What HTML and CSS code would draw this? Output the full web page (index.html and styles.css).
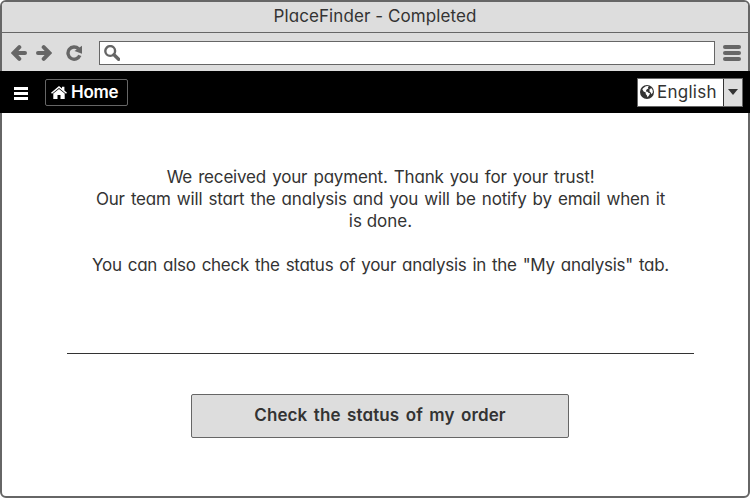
FILE: index.html
```
<!DOCTYPE html>
<html lang="en">
<head>
<meta charset="utf-8">
<title>PlaceFinder - Completed</title>
<link rel="stylesheet" href="styles.css">
</head>
<body>
<div class="window">
  <header class="titlebar">PlaceFinder - Completed</header>
  <div class="toolbar">
    <svg class="arrow" viewBox="0 0 16 16"><path d="M8.300 2.200 2.600 8l5.700 5.800M3 8h11"/></svg>
    <svg class="arrow forward" viewBox="0 0 16 16"><path d="M7.700 2.200l5.700 5.800-5.700 5.800M13 8H2"/></svg>
    <svg class="reload" viewBox="0 0 16 16"><path class="ring" d="M13.800 10.300A6.100 6.100 0 1 1 12.500 3.800"/><path class="tip" d="M16 .8v8L8.500 6z"/></svg>
    <div class="address"><svg class="search" viewBox="0 0 16 16"><circle cx="6.200" cy="6" r="4.900"/><path d="M10 9.800l4.600 4.400"/></svg></div>
    <div class="menu"><i></i><i></i><i></i></div>
  </div>
  <nav class="navbar">
    <div class="bars"><i></i><i></i><i></i></div>
    <a class="home"><svg viewBox="0 0 16 13"><path d="M8 0 11 2.500V.7h2.400v3.800L16 6.700l-1 1.100-7-5.800-7 5.800L0 6.700z"/><path d="M8 2.900l5.700 4.700V13H9.500V9h-3v4H2.300V7.600z"/></svg><span>Home</span></a>
    <div class="language">
      <div class="value"><svg viewBox="0 0 14 14"><circle cx="7" cy="7" r="7"/><path d="M5.800 1.200l2-.2 1 .6-.9.900.5 1-1.500.7-.8 1.300-.2 1 1.500.2 1.300 1.200 1.400.4-.8 1.800-1.700 2.200-.8-2-1.100-1.400.1-1.300L3.600 6.400 2.300 4.300l1-1.400zM9.600 4.100l1.900-.8 1.200 2 .1 2.200-1.200 1.800-.9-1.800-1.200-1z"/></svg><span>English</span></div>
      <div class="toggle"></div>
    </div>
  </nav>
  <main class="content">
    <p class="message">
      <span class="thanks">We received your payment. Thank you for your trust!</span><br>
      <span class="notice">Our team will start the analysis and you will be notify by email when it</span><br>
      <span>is done.</span><br><br>
      <span class="hint">You can also check the status of your analysis in the "My analysis" tab.</span>
    </p>
    <hr>
    <button class="status">Check the status of my order</button>
  </main>
</div>
</body>
</html>
```
FILE: styles.css
```
* { box-sizing: border-box; }
body { margin: 0; background: #fff; color: #333; font: 17px/22px Inter, "Open Sans", sans-serif; font-feature-settings: "cv11"; }
svg { display: block; flex: none; }
.window { height: 498px; border: 2px solid #666; border-radius: 6px; background: #fff; }
.titlebar { height: 31px; background: #ddd; border-bottom: 1px solid #666; border-radius: 4px 4px 0 0; text-align: center; line-height: 28px; letter-spacing: .08px; }
.toolbar { height: 38px; background: #ddd; display: flex; align-items: center; padding: 1px 7px 0 9px; }
.arrow { width: 16px; height: 16px; margin-right: 9px; fill: none; stroke: #666; stroke-width: 4; stroke-linecap: round; }
.reload { width: 16px; height: 16px; margin: 0 17px 0 6px; }
.arrow.forward { margin-right: 8px; }
.ring { fill: none; stroke: #666; stroke-width: 3.4; }
.tip { fill: #666; }
.address { width: 616px; height: 24px; background: #fff; border: 1px solid #666; padding: 3px 4px; }
.search { width: 16px; height: 16px; fill: none; stroke: #666; stroke-width: 2.4; }
.search path { stroke-width: 3.4; stroke-linecap: round; }
.menu { width: 18px; margin-left: 8px; display: grid; gap: 2px; }
.menu i { height: 4px; border-radius: 2px; background: #666; }
.navbar { height: 42px; margin: 0 -2px; background: #000; display: flex; align-items: center; padding: 0 7px 0 14px; }
.bars { width: 14px; margin-right: 17px; display: grid; gap: 2px; padding-top: 2px; }
.bars i { height: 3px; background: #fff; }
.home { width: 83px; height: 27px; border: 1px solid #666; border-radius: 2px; color: #fff; font-weight: 600; letter-spacing: -.3px; display: flex; align-items: center; padding-left: 5px; }
.home svg { width: 16px; height: 13px; margin-right: 4px; fill: #fff; }
.language { margin-left: auto; width: 106px; height: 29px; border: 1px solid #666; background: #fff; display: flex; }
.value { width: 85px; display: flex; align-items: center; padding-left: 2px; letter-spacing: .25px; }
.value svg { width: 14px; height: 14px; margin-right: 3px; }
.value circle { fill: #333; }
.value path { fill: #fff; }
.toggle { flex: 1; background: #ddd; border-left: 1px solid #333; display: grid; place-items: center; }
.toggle::after { content: ""; border: 5px solid transparent; border-top: 6px solid #333; border-bottom: 0; }
.content { padding: 53px 54px 0 65px; }
.message { margin: 0; height: 187px; text-align: center; white-space: nowrap; }
.thanks { letter-spacing: -.18px; word-spacing: 1.5px; }
.notice { letter-spacing: -.19px; word-spacing: 1.5px; }
.hint { letter-spacing: -.28px; word-spacing: 1.5px; }
hr { margin: 0; border: 0; height: 1px; background: #333; }
.status { display: block; width: 378px; height: 44px; margin: 40px 0 0 124px; padding: 0 0 2px; border: 1px solid #666; border-radius: 2px; background: #ddd; color: #333; font: inherit; font-weight: 600; letter-spacing: .12px; word-spacing: 2px; }
```
